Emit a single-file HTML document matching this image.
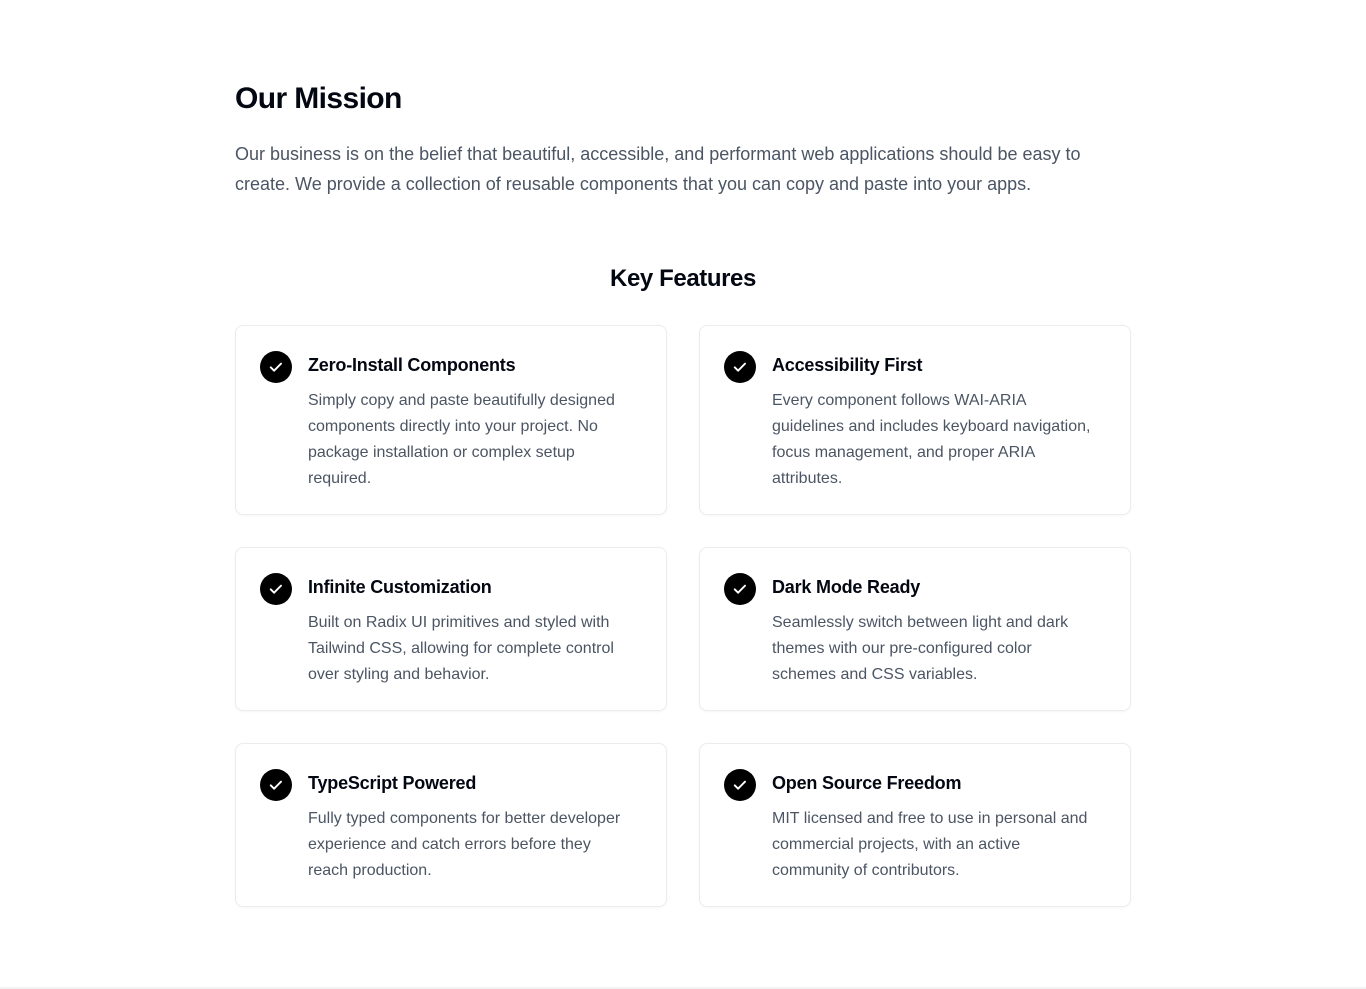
<!DOCTYPE html>
<html><head><meta charset="utf-8"><style>
*{box-sizing:border-box;margin:0;padding:0}
body{width:1366px;height:989px;background:#fff;font-family:"Liberation Sans",sans-serif;color:#030712;position:relative;overflow:hidden}
.wrap{position:absolute;left:235px;width:896px;top:0}
h1{position:absolute;top:80px;font-size:30px;line-height:38px;font-weight:700;letter-spacing:-0.6px}
.intro{position:absolute;top:139px;width:900px;font-size:18px;line-height:30px;color:#4b5563;white-space:nowrap}
h2{position:absolute;top:263px;width:896px;text-align:center;font-size:24px;line-height:32px;font-weight:700;letter-spacing:-0.4px}
.card{position:absolute;width:432px;border:1px solid #ececec;border-radius:8px;padding:24px;box-shadow:0 1px 2px rgba(0,0,0,0.04);display:flex}
.ic{width:32px;height:32px;border-radius:50%;background:#000;flex:none;display:flex;align-items:center;justify-content:center;margin-top:1px}
.tx{margin-left:16px;white-space:nowrap}
.tx h3{font-size:18px;line-height:28px;font-weight:600;margin-top:1px;letter-spacing:-0.2px}
.tx p{margin-top:9px;font-size:16px;line-height:26px;color:#4b5563}
.foot{position:absolute;left:0;right:0;top:987px;height:2px;background:#f2f2f2}
</style></head><body>
<div class="wrap">
<h1>Our Mission</h1>
<p class="intro">Our business is on the belief that beautiful, accessible, and performant web applications should be easy to<br>create. We provide a collection of reusable components that you can copy and paste into your apps.</p>
<h2>Key Features</h2>
<div class="card" style="left:0;top:325px;height:190px"><div class="ic"><svg width="18" height="18" viewBox="0 0 16 16"><path d="M3.3 8.3l3 3 6.2-6.3" fill="none" stroke="#fff" stroke-width="1.7" stroke-linecap="round" stroke-linejoin="round"/></svg></div><div class="tx"><h3>Zero-Install Components</h3><p>Simply copy and paste beautifully designed<br>components directly into your project. No<br>package installation or complex setup<br>required.</p></div></div>
<div class="card" style="left:464px;top:325px;height:190px"><div class="ic"><svg width="18" height="18" viewBox="0 0 16 16"><path d="M3.3 8.3l3 3 6.2-6.3" fill="none" stroke="#fff" stroke-width="1.7" stroke-linecap="round" stroke-linejoin="round"/></svg></div><div class="tx"><h3>Accessibility First</h3><p>Every component follows WAI-ARIA<br>guidelines and includes keyboard navigation,<br>focus management, and proper ARIA<br>attributes.</p></div></div>
<div class="card" style="left:0;top:547px;height:164px"><div class="ic"><svg width="18" height="18" viewBox="0 0 16 16"><path d="M3.3 8.3l3 3 6.2-6.3" fill="none" stroke="#fff" stroke-width="1.7" stroke-linecap="round" stroke-linejoin="round"/></svg></div><div class="tx"><h3>Infinite Customization</h3><p>Built on Radix UI primitives and styled with<br>Tailwind CSS, allowing for complete control<br>over styling and behavior.</p></div></div>
<div class="card" style="left:464px;top:547px;height:164px"><div class="ic"><svg width="18" height="18" viewBox="0 0 16 16"><path d="M3.3 8.3l3 3 6.2-6.3" fill="none" stroke="#fff" stroke-width="1.7" stroke-linecap="round" stroke-linejoin="round"/></svg></div><div class="tx"><h3>Dark Mode Ready</h3><p>Seamlessly switch between light and dark<br>themes with our pre-configured color<br>schemes and CSS variables.</p></div></div>
<div class="card" style="left:0;top:743px;height:164px"><div class="ic"><svg width="18" height="18" viewBox="0 0 16 16"><path d="M3.3 8.3l3 3 6.2-6.3" fill="none" stroke="#fff" stroke-width="1.7" stroke-linecap="round" stroke-linejoin="round"/></svg></div><div class="tx"><h3>TypeScript Powered</h3><p>Fully typed components for better developer<br>experience and catch errors before they<br>reach production.</p></div></div>
<div class="card" style="left:464px;top:743px;height:164px"><div class="ic"><svg width="18" height="18" viewBox="0 0 16 16"><path d="M3.3 8.3l3 3 6.2-6.3" fill="none" stroke="#fff" stroke-width="1.7" stroke-linecap="round" stroke-linejoin="round"/></svg></div><div class="tx"><h3>Open Source Freedom</h3><p>MIT licensed and free to use in personal and<br>commercial projects, with an active<br>community of contributors.</p></div></div>
</div>
<div class="foot"></div>
</body></html>
